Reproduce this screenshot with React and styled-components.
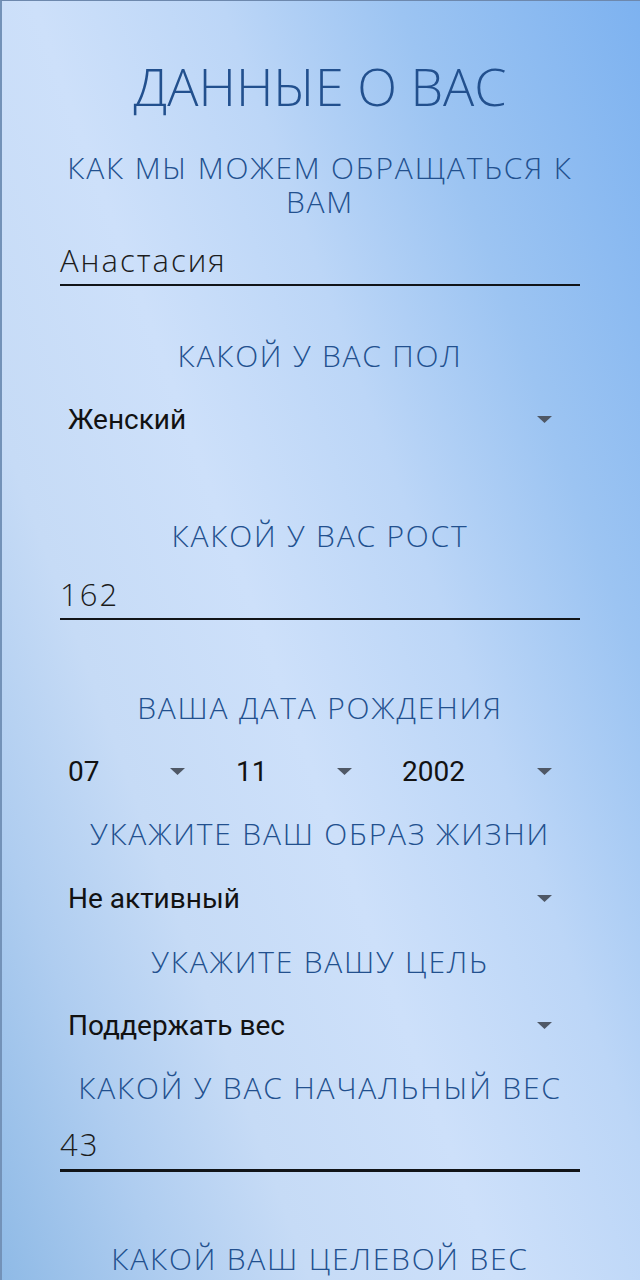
import React from 'react';
import styled, { createGlobalStyle } from 'styled-components';

const GlobalStyle = createGlobalStyle`
  html, body {
    margin: 0;
    padding: 0;
  }
  * {
    box-sizing: border-box;
  }
`;

const Screen = styled.div`
  width: 640px;
  height: 1280px;
  overflow: hidden;
  display: flex;
  flex-direction: column;
  padding: 0 60px 0 58px;
  border-left: 2px solid #7392b8;
  border-top: 1px solid #6d88ad;
  background: linear-gradient(
    250deg,
    #7db2f0 0%,
    #9cc4f2 22%,
    #bcd6f7 38%,
    #cde0fa 55%,
    #c6dbf6 72%,
    #afcdf0 85%,
    #8fbae6 100%
  );
  font-family: "Open Sans", "Liberation Sans", sans-serif;
`;

const Title = styled.h1`
  margin: 55px 0 0;
  font-size: 52px;
  line-height: 60px;
  font-weight: 300;
  color: #22508e;
  text-align: center;
  text-transform: uppercase;
`;

const Label = styled.div`
  margin-top: ${({ $gap }) => $gap}px;
  font-size: 30px;
  line-height: 34px;
  font-weight: 300;
  letter-spacing: 1.8px;
  color: #22508e;
  text-align: center;
  text-transform: uppercase;
`;

const Field = styled.div`
  margin-top: ${({ $gap }) => $gap}px;
  font-size: 31px;
  line-height: 36px;
  font-weight: 300;
  letter-spacing: 2px;
  color: #1c1c1c;
  padding-bottom: ${({ $focused }) => ($focused ? 7 : 6)}px;
  border-bottom: ${({ $focused }) => ($focused ? 3 : 2)}px solid #111418;
`;

const SpinnerRow = styled.div`
  margin-top: ${({ $gap }) => $gap}px;
  display: grid;
  grid-template-columns: ${({ $columns }) => $columns || '1fr'};
`;

const Spinner = styled.div`
  height: 56px;
  display: flex;
  align-items: center;
  justify-content: space-between;
  padding: 0 ${({ $pr }) => $pr || 28}px 0 8px;
  font-family: Roboto, "Liberation Sans", sans-serif;
  font-size: 28px;
  color: #121212;
`;

const ArrowIcon = styled.svg`
  width: 15px;
  height: 7px;
  flex: none;
`;

const Arrow = () => (
  <ArrowIcon viewBox="0 0 15 7">
    <polygon points="0,0 15,0 7.5,7" fill="#4f5866" />
  </ArrowIcon>
);

export default function App() {
  return (
    <>
      <GlobalStyle />
      <Screen>
        <Title>Данные о вас</Title>

        <Label $gap={35}>Как мы можем обращаться к вам</Label>
        <Field $gap={23}>Анастасия</Field>

        <Label $gap={53}>Какой у вас пол</Label>
        <SpinnerRow $gap={18}>
          <Spinner>
            Женский
            <Arrow />
          </Spinner>
        </SpinnerRow>

        <Label $gap={72}>Какой у вас рост</Label>
        <Field $gap={23}>162</Field>

        <Label $gap={71}>Ваша дата рождения</Label>
        <SpinnerRow $gap={18} $columns="168px 166px 1fr">
          <Spinner $pr={43}>
            07
            <Arrow />
          </Spinner>
          <Spinner $pr={42}>
            11
            <Arrow />
          </Spinner>
          <Spinner>
            2002
            <Arrow />
          </Spinner>
        </SpinnerRow>

        <Label $gap={18}>Укажите ваш образ жизни</Label>
        <SpinnerRow $gap={19}>
          <Spinner>
            Не активный
            <Arrow />
          </Spinner>
        </SpinnerRow>

        <Label $gap={19}>Укажите вашу цель</Label>
        <SpinnerRow $gap={18}>
          <Spinner>
            Поддержать вес
            <Arrow />
          </Spinner>
        </SpinnerRow>

        <Label $gap={18}>Какой у вас начальный вес</Label>
        <Field $gap={21} $focused>43</Field>

        <Label $gap={70}>Какой ваш целевой вес</Label>
      </Screen>
    </>
  );
}
